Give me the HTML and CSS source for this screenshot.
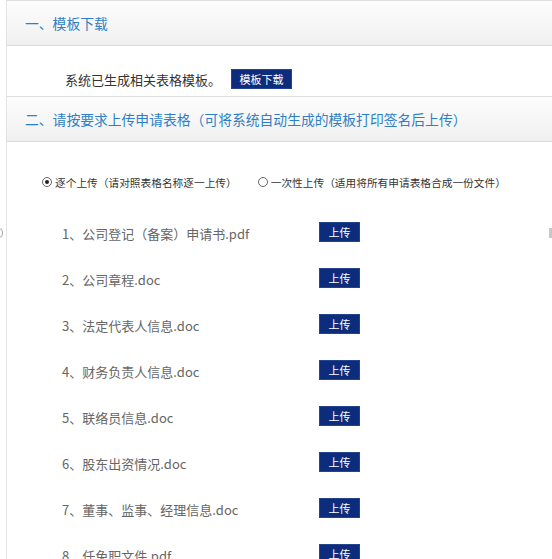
FILE: index.html
```html
<!DOCTYPE html>
<html lang="zh-CN">
<head>
<meta charset="utf-8">
<title>上传申请表格</title>
<link rel="stylesheet" href="styles.css">
</head>
<body>
<div class="page">
  <span class="edge edge-left"></span>
  <span class="edge edge-right"></span>
  <div class="panel">
    <div class="panel-head">一、模板下载</div>
    <div class="panel-body download">
      <span class="download-text">系统已生成相关表格模板。</span>
      <button class="btn btn-wide">模板下载</button>
    </div>
    <div class="panel-head">二、请按要求上传申请表格（可将系统自动生成的模板打印签名后上传）</div>
    <div class="panel-body upload">
      <div class="radios">
        <label class="radio"><span class="dot checked"></span>逐个上传（请对照表格名称逐一上传）</label>
        <label class="radio"><span class="dot"></span>一次性上传（适用将所有申请表格合成一份文件）</label>
      </div>
      <ul class="files">
        <li class="file"><span class="file-name">1、公司登记（备案）申请书.pdf</span><button class="btn">上传</button></li>
        <li class="file"><span class="file-name">2、公司章程.doc</span><button class="btn">上传</button></li>
        <li class="file"><span class="file-name">3、法定代表人信息.doc</span><button class="btn">上传</button></li>
        <li class="file"><span class="file-name">4、财务负责人信息.doc</span><button class="btn">上传</button></li>
        <li class="file"><span class="file-name">5、联络员信息.doc</span><button class="btn">上传</button></li>
        <li class="file"><span class="file-name">6、股东出资情况.doc</span><button class="btn">上传</button></li>
        <li class="file"><span class="file-name">7、董事、监事、经理信息.doc</span><button class="btn">上传</button></li>
        <li class="file"><span class="file-name">8、任免职文件.pdf</span><button class="btn">上传</button></li>
      </ul>
    </div>
  </div>
</div>
</body>
</html>
```
FILE: styles.css
```css
html, body {
  margin: 0;
  padding: 0;
  background: #fff;
}
body {
  font-family: "Noto Sans CJK SC", "Liberation Sans", sans-serif;
  color: #333;
  overflow: hidden;
}
.page {
  position: relative;
  width: 552px;
  height: 559px;
  overflow: hidden;
}
.edge {
  position: absolute;
  top: 228px;
  height: 10px;
  box-sizing: border-box;
}
.edge-left {
  left: -6px;
  width: 9px;
  border: 1px solid #aaa;
  border-radius: 4px;
}
.edge-right {
  left: 549px;
  width: 4px;
  background: #c8c8c8;
}
.panel {
  margin-left: 6px;
  width: 560px;
  border-left: 1px solid #e4e4e4;
}
.panel-head {
  height: 44px;
  line-height: 44px;
  padding-left: 18px;
  border-top: 1px solid #dedede;
  border-bottom: 1px solid #dcdcdc;
  background: linear-gradient(#fdfdfd, #f0f0f0);
  color: #2e7fc6;
  font-size: 13.8px;
  white-space: nowrap;
}
.download {
  display: flex;
  align-items: center;
  height: 50px;
  padding-left: 58px;
  box-sizing: border-box;
  padding-top: 16px;
}
.download-text {
  font-size: 13px;
  color: #333;
}
.btn {
  font-family: "Noto Sans CJK SC", sans-serif;
  font-size: 11px;
  color: #fff;
  background: #0d2d7c;
  border: 1px solid #24448e;
  width: 41px;
  height: 20px;
  padding: 0;
  line-height: 18px;
  cursor: pointer;
}
.btn-wide {
  width: 61px;
  margin-left: 10px;
}
.upload {
  padding-top: 32px;
}
.radios {
  display: flex;
  align-items: center;
  height: 16px;
  padding-left: 35px;
  gap: 21px;
  font-size: 10.7px;
  color: #333;
  white-space: nowrap;
}
.radio {
  display: flex;
  align-items: center;
  gap: 3px;
}
.dot {
  width: 10px;
  height: 10px;
  box-sizing: border-box;
  border: 1px solid #666;
  border-radius: 50%;
  background: #fff;
  position: relative;
}
.dot.checked::after {
  content: "";
  position: absolute;
  left: 2px;
  top: 2px;
  width: 4px;
  height: 4px;
  border-radius: 50%;
  background: #222;
}
.files {
  list-style: none;
  margin: 19px 0 0;
  padding: 0 0 0 55px;
}
.file {
  display: grid;
  grid-template-columns: 257px auto;
  align-items: center;
  height: 46px;
}
.file-name {
  font-size: 13px;
  color: #666;
  padding-top: 3px;
}
.file .btn {
  justify-self: start;
}
```
